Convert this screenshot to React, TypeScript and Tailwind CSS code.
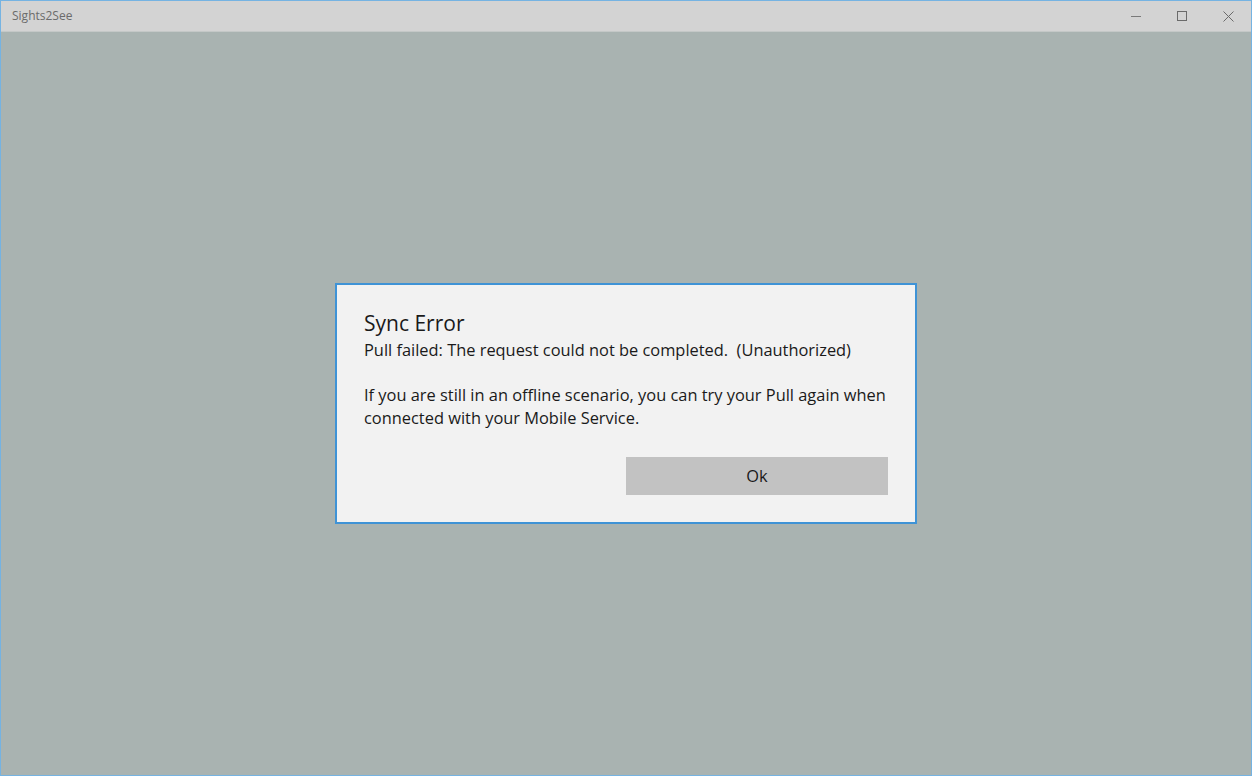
import React from 'react';

export default function App() {
  return (
    <div className="w-[1252px] h-[776px] flex flex-col border border-[#75b3e2] bg-[#a9b3b1] font-['Open_Sans',sans-serif] overflow-hidden">
      {/* Title bar */}
      <div className="h-[31px] shrink-0 flex items-center justify-between bg-[#d3d3d3] border-b border-[#c4c8c7]">
        <span className="pl-[11px] text-[12px] text-[#6b6b6b]">Sights2See</span>
        <div className="flex h-full">
          <div className="w-[46px] h-full flex items-center justify-center">
            <div className="w-[10px] h-px bg-[#7a7a7a]" />
          </div>
          <div className="w-[46px] h-full flex items-center justify-center">
            <div className="w-[10px] h-[10px] border border-[#6a6a6a]" />
          </div>
          <div className="w-[46px] h-full flex items-center justify-center">
            <svg width="11" height="11" viewBox="0 0 11 11" stroke="#6a6a6a" strokeWidth="1">
              <path d="M0.5 0.5 L10.5 10.5 M10.5 0.5 L0.5 10.5" />
            </svg>
          </div>
        </div>
      </div>

      {/* Content */}
      <div className="flex-1 flex items-center justify-center">
        <div className="w-[582px] h-[241px] border-2 border-[#3f93d6] bg-[#f2f2f2] px-[27px] pt-[24px] flex flex-col text-[#1a1a1a]">
          <h2 className="text-[21px] leading-[28px]">Sync Error</h2>
          <p className="text-[16.4px] leading-[23px] mt-[1px] whitespace-nowrap">
            Pull failed: The request could not be completed.&nbsp; (Unauthorized)
          </p>
          <p className="text-[16.4px] leading-[23px] mt-[22px]">
            If you are still in an offline scenario, you can try your Pull again when connected with your Mobile Service.
          </p>
          <div className="flex justify-end mt-[28px]">
            <button className="w-[262px] h-[38px] bg-[#c2c2c2] text-[16.4px] text-[#1a1a1a]">Ok</button>
          </div>
        </div>
      </div>
    </div>
  );
}
